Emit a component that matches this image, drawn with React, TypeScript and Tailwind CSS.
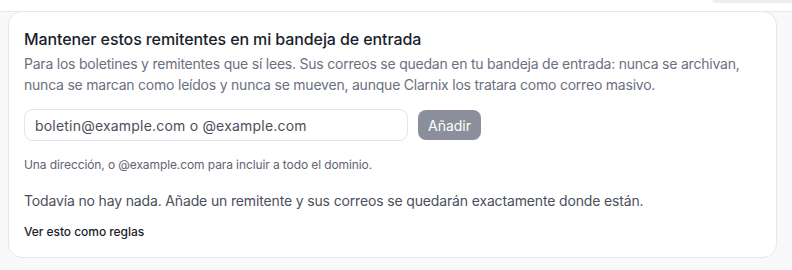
export default function App() {
  return (
    <div className="relative w-[792px] h-[270px] bg-[#f8f9fb] overflow-hidden" style={{ fontFamily: "Inter, 'Noto Sans', sans-serif" }}>
      <div className="h-[12px] bg-white border-b border-[#e6e8ec]"></div>
      <div className="absolute top-0 left-[713px] w-[79px] h-[3px] bg-[#eceef2] rounded-bl-md"></div>
      <div className="ml-[8px] w-[769px] h-[247px] bg-white border border-[#e6e8ec] rounded-[14px] -mt-px px-[15px] pt-[15px]">
        <h2 className="text-[16px] leading-[24px] font-medium tracking-[-0.1px] text-[#1b1e2b]">Mantener estos remitentes en mi bandeja de entrada</h2>
        <p className="mt-[2px] text-[14px] leading-[21px] tracking-[-0.22px] text-[#6b7080]">
          Para los boletines y remitentes que sí lees. Sus correos se quedan en tu bandeja de entrada: nunca se archivan, nunca se marcan como leídos y nunca se mueven, aunque Clarnix los tratara como correo masivo.
        </p>
        <div className="mt-[14px] flex items-center gap-[10px]">
          <div className="w-[384px] h-[32px] rounded-[9px] border border-[#e3e5ea] flex items-center px-[10px] text-[14px] tracking-[0.2px] text-[#4b4f5c]">
            boletin@example.com o @example.com
          </div>
          <button className="h-[30px] px-[10px] rounded-[8px] bg-[#8a8f9b] text-white text-[14px]">Añadir</button>
        </div>
        <p className="mt-[16px] text-[12px] leading-[16px] tracking-[-0.1px] text-[#5f6472]">Una dirección, o @example.com para incluir a todo el dominio.</p>
        <p className="mt-[18px] text-[14px] leading-[20px] tracking-[-0.15px] text-[#4b4f5c]">Todavía no hay nada. Añade un remitente y sus correos se quedarán exactamente donde están.</p>
        <p className="mt-[13px] text-[12px] leading-[16px] font-medium tracking-[-0.05px] text-[#1b1e2b]">Ver esto como reglas</p>
      </div>
    </div>
  );
}
